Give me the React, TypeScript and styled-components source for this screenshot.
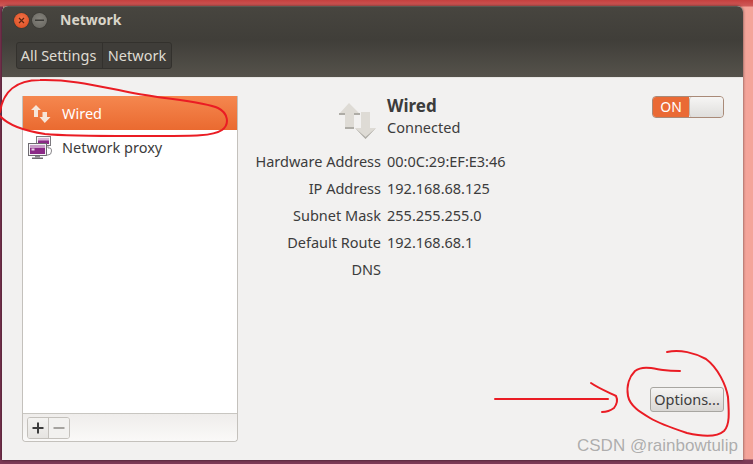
import React from "react";
import styled, { createGlobalStyle } from "styled-components";

const Global = createGlobalStyle`
  html, body { margin: 0; padding: 0; }
  body { width: 753px; height: 464px; overflow: hidden; font-family: "Noto Sans", "Open Sans", sans-serif; }
`;

const Desktop = styled.div`
  position: relative;
  width: 753px;
  height: 464px;
  box-sizing: border-box;
  padding: 6px 10px 4px 2px;
  overflow: hidden;
  background:
    linear-gradient(to bottom, #c5403f 0, #cf5a58 6px, rgba(0,0,0,0) 7px),
    linear-gradient(to bottom, rgba(0,0,0,0) 459px, #7c3a56 460px),
    linear-gradient(to right, #7a3350 0, #7a3350 3px, #f09a90 3px, #f4a49a 100%);
`;

const Window = styled.div`
  height: 100%;
  display: flex;
  flex-direction: column;
  border-radius: 6px 6px 0 0;
  overflow: hidden;
  background: #f2f1f0;
  box-shadow: 0 0 3px rgba(0, 0, 0, 0.6);
`;

const TitleBar = styled.div`
  height: 34px;
  display: flex;
  align-items: center;
  padding: 0 0 6px 12px;
  background: linear-gradient(to bottom, #47453f, #403e39);
  border-top: 1px solid #5a5852;
  box-sizing: border-box;
`;

const WinButton = styled.div<{ $close?: boolean }>`
  width: 15px;
  height: 15px;
  border-radius: 50%;
  margin-right: 3px;
  display: flex;
  align-items: center;
  justify-content: center;
  background: ${(p) =>
    p.$close
      ? "radial-gradient(circle at 50% 40%, #f2744a, #d9481c)"
      : "radial-gradient(circle at 50% 40%, #85837c, #65635d)"};
  box-shadow: 0 0 1px rgba(0,0,0,.7);
`;

const Title = styled.div`
  margin-left: 10px;
  padding-bottom: 2px;
  font-size: 14px;
  font-weight: 700;
  color: #dad5c9;
`;

const ToolBar = styled.div`
  height: 37px;
  display: flex;
  align-items: flex-start;
  padding: 2px 0 0 14px;
  box-sizing: border-box;
  background: linear-gradient(to bottom, #403e39, #55524b);
`;

const Crumbs = styled.div`
  display: flex;
  height: 27px;
  border: 1px solid #33312d;
  border-radius: 3px;
  box-sizing: border-box;
  background: #3f3d39;
`;

const Crumb = styled.div<{ $w: number; $last?: boolean }>`
  width: ${(p) => p.$w}px;
  box-sizing: border-box;
  text-align: center;
  font-size: 14.5px;
  line-height: 25px;
  padding-right: ${(p) => (p.$last ? "0" : "2px")};
  color: #dfdbd2;
  border-right: ${(p) => (p.$last ? "0" : "1px solid #33312d")};
`;

const Content = styled.div`
  flex: 1;
  min-height: 0;
  display: flex;
  padding: 18px 19px 18px 20px;
  border-top: 1px solid #e8e6e3;
`;

const ListPanel = styled.div`
  width: 216px;
  flex: none;
  display: flex;
  flex-direction: column;
  border: 1px solid #c4c1bc;
  border-top: 0;
  border-radius: 0 0 4px 4px;
  box-sizing: border-box;
  background: #fff;
`;

const ListRows = styled.div`
  flex: 1;
`;

const Row = styled.div<{ $active?: boolean }>`
  height: 34px;
  display: flex;
  align-items: center;
  box-sizing: border-box;
  padding-left: ${(p) => (p.$active ? "8px" : "5px")};
  gap: ${(p) => (p.$active ? "11px" : "10px")};
  font-size: 14.5px;
  color: ${(p) => (p.$active ? "#fff" : "#3c3c3c")};
  background: ${(p) =>
    p.$active ? "linear-gradient(to bottom, #f5874f, #ea6a30)" : "transparent"};
`;

const ListFoot = styled.div`
  height: 28px;
  display: flex;
  align-items: center;
  padding-left: 4px;
  box-sizing: border-box;
  border-top: 1px solid #c8c6c1;
  background: linear-gradient(to bottom, #efedeb, #faf9f8);
  border-radius: 0 0 4px 4px;
`;

const FootGroup = styled.div`
  display: flex;
  height: 20px;
  border: 1px solid #c4c1bc;
  border-radius: 3px;
  overflow: hidden;
`;

const FootBtn = styled.div<{ $off?: boolean }>`
  width: 20px;
  display: flex;
  align-items: center;
  justify-content: center;
  background: ${(p) => (p.$off ? "#f2f1ef" : "linear-gradient(to bottom, #f4f3f1, #e6e4e1)")};
  border-right: ${(p) => (p.$off ? "0" : "1px solid #c4c1bc")};
`;

const Details = styled.div`
  flex: 1;
  display: flex;
  flex-direction: column;
`;

const HeadRow = styled.div`
  height: 51px;
  flex: none;
  display: grid;
  grid-template-columns: 143px 1fr auto;
  column-gap: 6px;
  align-items: start;
`;

const HeadIcon = styled.div`
  display: flex;
  justify-content: flex-end;
  padding: 6px 5px 0 0;
`;

const Head = styled.div`
  display: flex;
  flex-direction: column;
`;

const HeadName = styled.div`
  font-size: 17px;
  font-weight: 700;
  line-height: 20px;
  color: #3c3c3c;
`;

const HeadState = styled.div`
  font-size: 14.5px;
  line-height: 22px;
  color: #3c3c3c;
`;

const InfoGrid = styled.div`
  display: grid;
  grid-template-columns: 143px 1fr;
  column-gap: 6px;
  grid-auto-rows: 27px;
  align-items: center;
  font-size: 14.5px;
  color: #3c3c3c;
`;

const Label = styled.div`
  text-align: right;
  white-space: nowrap;
`;

const Value = styled.div`
  white-space: nowrap;
`;

const Switch = styled.div`
  width: 72px;
  height: 22px;
  display: flex;
  border-radius: 4px;
  overflow: hidden;
  box-sizing: border-box;
  border: 1px solid #a98a78;
`;

const SwitchOn = styled.div`
  width: 36px;
  text-align: center;
  font-size: 14px;
  line-height: 20px;
  color: #fff;
  background: #ea6a35;
`;

const SwitchKnob = styled.div`
  flex: 1;
  background: linear-gradient(to bottom, #f6f5f4, #dfdedc);
  border-left: 1px solid #c0b6ae;
  border-radius: 3px;
`;

const Foot = styled.div`
  margin-top: auto;
  display: flex;
  justify-content: flex-end;
  padding-bottom: 30px;
`;

const OptionsBtn = styled.div`
  width: 74px;
  height: 25px;
  box-sizing: border-box;
  border: 1px solid #a8a6a1;
  border-radius: 3px;
  text-align: center;
  font-size: 14.5px;
  line-height: 23px;
  color: #3c3c3c;
  background: linear-gradient(to bottom, #f5f4f3, #d9d7d4);
`;

const Ink = styled.svg`
  position: absolute;
  left: 0;
  top: 0;
  pointer-events: none;
`;

const Watermark = styled.div`
  position: absolute;
  left: 577px;
  top: 436px;
  font-family: "Liberation Sans", Arial, sans-serif;
  font-size: 17px;
  line-height: 20px;
  white-space: nowrap;
  color: rgba(135, 135, 135, 0.65);
`;

const SmallArrows = () => (
  <svg width="20" height="20" viewBox="0 0 20 20">
    <path d="M0 7 L5 2 L10 7 L7 7 L7 14 L3 14 L3 7 Z" fill="#f6e6da" />
    <path d="M11.5 9 H16 V14 H19.5 L13.8 20 L8.5 14 H11.5 Z" fill="#f6e6da" />
  </svg>
);

const BigArrows = () => (
  <svg width="37" height="37" viewBox="0 0 37 37">
    <path d="M0 12 L10 1 L21 12 L15 12 L15 26 L6 26 L6 12 Z" fill="#dedbd5" />
    <rect x="0" y="11" width="6" height="2" fill="#aeaca6" />
    <rect x="15" y="11" width="6" height="2" fill="#aeaca6" />
    <rect x="6" y="25" width="9" height="2" fill="#aeaca6" />
    <path d="M22 10 H31 V26 H37 L26.5 37 L16 26 H22 Z" fill="#dedbd5" />
    <path d="M16 26 L26.5 37 L37 26 L26.5 35 Z" fill="#aeaca6" />
  </svg>
);

const ProxyIcon = () => (
  <svg width="24" height="23" viewBox="0 0 24 23">
    <rect x="8.5" y="0.5" width="14" height="9" fill="#f4f2f5" stroke="#7d7a80" />
    <rect x="10" y="2" width="11" height="6" fill="#8b2a87" />
    <rect x="10" y="2" width="11" height="2.5" fill="#d9b6d8" />
    <rect x="0.5" y="7.5" width="18" height="12" fill="#f4f2f5" stroke="#6e6b70" />
    <rect x="2" y="9" width="15" height="9" fill="#8b2a87" />
    <rect x="2" y="9" width="15" height="3" fill="#c99cc8" />
    <rect x="3.5" y="12.5" width="3" height="2" fill="#e9d5e8" />
    <rect x="7" y="20" width="5" height="1.5" fill="#8a888c" />
    <rect x="4" y="21.5" width="11" height="1.5" fill="#6e6b70" />
    <path d="M20 10 V12 H22 Q23.5 12 23.5 15 Q23.5 19 20 19 H18" fill="none" stroke="#8a888c" />
  </svg>
);

export default function App() {
  return (
    <>
      <Global />
      <Desktop>
        <Window>
          <TitleBar>
            <WinButton $close>
              <svg width="7" height="7" viewBox="0 0 7 7">
                <path d="M1 1 L6 6 M6 1 L1 6" stroke="#5a2410" strokeWidth="1.2" />
              </svg>
            </WinButton>
            <WinButton>
              <svg width="9" height="3" viewBox="0 0 9 3">
                <rect x="0" y="0.5" width="9" height="1.5" fill="#3c3b37" />
              </svg>
            </WinButton>
            <Title>Network</Title>
          </TitleBar>
          <ToolBar>
            <Crumbs>
              <Crumb $w={86}>All Settings</Crumb>
              <Crumb $w={68} $last>Network</Crumb>
            </Crumbs>
          </ToolBar>
          <Content>
            <ListPanel>
              <ListRows>
                <Row $active>
                  <SmallArrows />
                  <span>Wired</span>
                </Row>
                <Row>
                  <ProxyIcon />
                  <span>Network proxy</span>
                </Row>
              </ListRows>
              <ListFoot>
                <FootGroup>
                  <FootBtn>
                    <svg width="12" height="12" viewBox="0 0 12 12">
                      <path d="M6 0.5 V11.5 M0.5 6 H11.5" stroke="#3c3c3c" strokeWidth="2" />
                    </svg>
                  </FootBtn>
                  <FootBtn $off>
                    <svg width="12" height="12" viewBox="0 0 12 12">
                      <path d="M0.5 6 H11.5" stroke="#a5a39f" strokeWidth="2" />
                    </svg>
                  </FootBtn>
                </FootGroup>
              </ListFoot>
            </ListPanel>
            <Details>
              <HeadRow>
                <HeadIcon>
                  <BigArrows />
                </HeadIcon>
                <Head>
                  <HeadName>Wired</HeadName>
                  <HeadState>Connected</HeadState>
                </Head>
                <Switch>
                  <SwitchOn>ON</SwitchOn>
                  <SwitchKnob />
                </Switch>
              </HeadRow>
              <InfoGrid>
                <Label>Hardware Address</Label>
                <Value>00:0C:29:EF:E3:46</Value>
                <Label>IP Address</Label>
                <Value>192.168.68.125</Value>
                <Label>Subnet Mask</Label>
                <Value>255.255.255.0</Value>
                <Label>Default Route</Label>
                <Value>192.168.68.1</Value>
                <Label>DNS</Label>
                <Value />
              </InfoGrid>
              <Foot>
                <OptionsBtn>Options...</OptionsBtn>
              </Foot>
            </Details>
          </Content>
        </Window>
        <Ink width="753" height="464" viewBox="0 0 753 464" fill="none" stroke="#ea1c24" strokeWidth="2" strokeLinecap="round">
          <path d="M0 112 C3 92 16 80 40 80 C75 79 105 88 133 93 C165 99 205 102 218 108 C228 113 230 124 222 130 C212 137 190 136 133 136 C95 136 65 136 45 134 C25 131 8 125 0 116" />
          <path d="M667 352 C680 349 695 353 706 359 C718 368 726 385 728 397 C729 412 730 425 724 431 C716 438 700 436 687 433 C672 428 658 423 650 418 C640 412 630 406 628 396 C626 385 630 376 635 371 C643 365 655 369 663 370 C670 371 675 371 680 371" />
          <path d="M495 399 H608" />
          <path d="M591 383 C598 388 610 393 616 396 C618 400 617 404 614 408 C610 411 606 412 602 412" />
        </Ink>
        <Watermark>CSDN @rainbowtulip</Watermark>
      </Desktop>
    </>
  );
}
